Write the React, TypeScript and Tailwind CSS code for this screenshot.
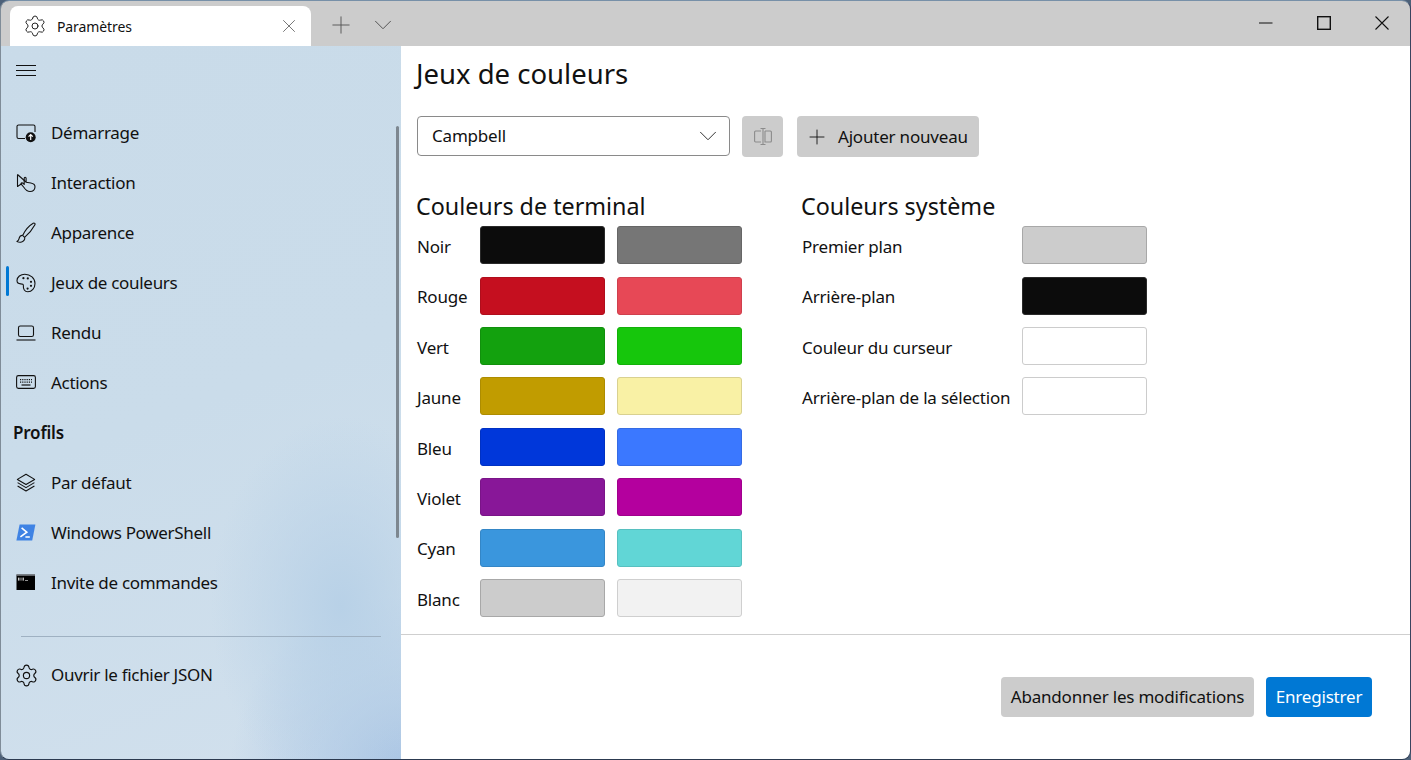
import { ChevronDown, Plus, Settings, X } from "lucide-react";
import type { ReactNode } from "react";

function StartupIcon() {
  return (
    <svg width="20" height="20" viewBox="0 0 20 20" fill="none" stroke="#111" strokeWidth="1.1">
      <path d="M9 15.5H2.6A1.6 1.6 0 0 1 1 13.9V3.6A1.6 1.6 0 0 1 2.6 2h14.8A1.6 1.6 0 0 1 19 3.6V9" />
      <circle cx="14.7" cy="14.2" r="5" fill="#111" stroke="none" />
      <path d="M14.7 17V11.6M12.6 13.6l2.1-2.1 2.1 2.1" stroke="#fff" strokeWidth="1.2" />
    </svg>
  );
}

function InteractionIcon() {
  return (
    <svg width="20" height="20" viewBox="0 0 20 20" fill="none" stroke="#111" strokeWidth="1.1" strokeLinejoin="round">
      <path d="M1.5 1.5V13.5L6 10.5" />
      <path d="M1.5 1.5L10 9" />
      <path d="M8 14.5L5.2 11.2C4.6 10.3 5.8 9.3 6.6 10L8.2 11.4V5.2C8.2 3.9 10.1 3.9 10.1 5.2V9.2L14.8 10C17.4 10.5 19.2 11.4 19 14C18.8 16.8 17 18.5 14 18.5C11.6 18.5 9.6 17 8 14.5Z" />
    </svg>
  );
}

function BrushIcon() {
  return (
    <svg width="20" height="22" viewBox="0 0 20 22" fill="none" stroke="#111" strokeWidth="1.1" strokeLinejoin="round">
      <path d="M6.6 13.4C9 8.6 13.4 3.4 17.2 1.2C18.4.6 19.5 1.6 18.9 2.8C16.8 6.8 12.6 12 8.6 15.4Z" />
      <path d="M6.6 13.4C3.8 13.4 3.2 15.4 2.9 17.2C2.7 18.3 1.9 19 .9 19.4C3.4 20.6 6.6 20.4 8 18.4C8.8 17.4 9 16.4 8.6 15.4" />
    </svg>
  );
}

function PaletteIcon() {
  return (
    <svg width="20" height="20" viewBox="0 0 20 20" fill="none" stroke="#111" strokeWidth="1.1">
      <path d="M8.8 1.2C4.6 1.2 1 4 1 7.6C1 10.2 3 10.9 4.7 10.9C6.4 10.9 7.7 11 7.4 13.2C7.1 15.8 8.6 18.8 11.8 18.8C15.8 18.8 19 15.2 19 10.4C19 5.2 14.4 1.2 8.8 1.2Z" />
      <circle cx="7.4" cy="5.2" r="1.1" fill="#111" stroke="none" />
      <circle cx="11.8" cy="5.4" r="1.1" fill="#111" stroke="none" />
      <circle cx="15" cy="8.8" r="1.1" fill="#111" stroke="none" />
      <circle cx="15" cy="12.8" r="1.1" fill="#111" stroke="none" />
      <circle cx="11.6" cy="15.6" r="1.1" fill="#111" stroke="none" />
    </svg>
  );
}

function LaptopIcon() {
  return (
    <svg width="20" height="20" viewBox="0 0 20 20" fill="none" stroke="#111" strokeWidth="1.1">
      <rect x="2.5" y="3" width="15" height="10.5" rx="1.8" />
      <path d="M.5 17h19" />
    </svg>
  );
}

function KeyboardIcon() {
  return (
    <svg width="20" height="20" viewBox="0 0 20 20" fill="none" stroke="#111" strokeWidth="1.1">
      <rect x=".6" y="2.6" width="18.8" height="12.8" rx="1.8" />
      <path d="M4 6.6h12M4 9.2h12" strokeDasharray="1.2 1" strokeWidth="1.2" />
      <path d="M5.5 12h9" strokeWidth="1.2" />
    </svg>
  );
}

function LayersIcon() {
  return (
    <svg width="20" height="20" viewBox="0 0 20 20" fill="none" stroke="#111" strokeWidth="1.1" strokeLinejoin="round">
      <path d="M10 1.2L18.6 6.4L10 11.4L1.4 6.4Z" />
      <path d="M1.6 9.6L10 14.6L18.4 9.6" />
      <path d="M1.6 13L10 18L18.4 13" />
    </svg>
  );
}

function PowerShellIcon() {
  return (
    <svg width="20" height="20" viewBox="0 0 20 20">
      <path d="M3.6 1.4H19.4L16.2 17.4H.4Z" fill="#3f83e4" />
      <path d="M5.6 4.8L10.8 9.2L4.4 13.8" fill="none" stroke="#fff" strokeWidth="1.6" />
      <path d="M9.4 14h4.4" stroke="#fff" strokeWidth="1.6" />
    </svg>
  );
}

function CmdIcon() {
  return (
    <svg width="20" height="20" viewBox="0 0 20 20">
      <rect x=".5" y="1.5" width="18.5" height="15.5" fill="#000" />
      <rect x=".5" y="1.5" width="18.5" height="1.2" fill="#8a8f96" />
      <rect x="2" y="4.6" width="1.5" height="3" fill="#c8c8c8" />
      <rect x="4.5" y="4.6" width="1" height="3" fill="#b0b0b0" />
      <rect x="6.5" y="4.6" width="1.5" height="3" fill="#b8b8b8" />
      <rect x="9" y="7" width="3" height="1" fill="#909090" />
    </svg>
  );
}

function SplitIcon() {
  return (
    <svg width="20" height="20" viewBox="0 0 20 20" fill="none" stroke="#8b8b8b" strokeWidth="1.1">
      <path d="M8 4H2.6A1 1 0 0 0 1.6 5V14A1 1 0 0 0 2.6 15H8" />
      <path d="M12 4H17.4A1 1 0 0 1 18.4 5V14A1 1 0 0 1 17.4 15H12V4" />
      <path d="M10 1.5V17.5M7.5 1.5H12.5M7.5 17.5H12.5" />
    </svg>
  );
}

function NavItem({ icon, label, active }: { icon: ReactNode; label: string; active?: boolean }) {
  return (
    <div className="relative h-[50px] flex items-center pl-[15px]">
      {active && <div className="absolute left-[5px] top-[8px] w-[3px] h-[30px] rounded-full bg-[#0078d4]" />}
      <div className="w-[20px] h-[20px] flex items-center justify-center shrink-0">{icon}</div>
      <span className="ml-[15px] text-[17px] text-[#111] tracking-[-0.3px]">{label}</span>
    </div>
  );
}

const TERMINAL = [
  { name: "Noir", a: "bg-[#0c0c0c] border-[#2a2a2a]", b: "bg-[#767676] border-[#666666]" },
  { name: "Rouge", a: "bg-[#c50f1f] border-[#b00e1c]", b: "bg-[#e74856] border-[#cf404d]" },
  { name: "Vert", a: "bg-[#13a10e] border-[#11900c]", b: "bg-[#16c60c] border-[#13b10a]" },
  { name: "Jaune", a: "bg-[#c19c00] border-[#ad8c00]", b: "bg-[#f9f1a5] border-[#d9d190]" },
  { name: "Bleu", a: "bg-[#0037da] border-[#0031c3]", b: "bg-[#3b78ff] border-[#356be4]" },
  { name: "Violet", a: "bg-[#881798] border-[#7a1488]", b: "bg-[#b4009e] border-[#a1008d]" },
  { name: "Cyan", a: "bg-[#3a96dd] border-[#3486c6]", b: "bg-[#61d6d6] border-[#57c0c0]" },
  { name: "Blanc", a: "bg-[#cccccc] border-[#a8a8a8]", b: "bg-[#f2f2f2] border-[#cfcfcf]" },
];

const SYSTEM = [
  { name: "Premier plan", c: "bg-[#cccccc] border-[#a8a8a8]" },
  { name: "Arrière-plan", c: "bg-[#0c0c0c] border-[#2a2a2a]" },
  { name: "Couleur du curseur", c: "bg-white border-[#cccccc]" },
  { name: "Arrière-plan de la sélection", c: "bg-white border-[#cccccc]" },
];

export default function App() {
  return (
    <div className="h-[760px] w-[1411px] bg-[#4d6179] overflow-hidden font-['Noto_Sans',sans-serif] tracking-[-0.2px]">
      <div className="h-full rounded-[9px] overflow-hidden flex flex-col border-t border-t-[#7790a8] border-l border-l-[#7f8c98] border-r border-r-[#39445f] border-b border-b-[#2c3a50]">
        {/* title bar */}
        <div className="h-[45px] shrink-0 bg-[#cccccc] flex">
          <div className="ml-[9px] mt-[5px] w-[301px] h-[40px] bg-white rounded-t-[8px] flex items-center pl-[13px] pr-[11px]">
            <Settings size={24} strokeWidth={1} className="text-[#222]" />
            <span className="ml-[10px] text-[14px] text-[#111] flex-1 tracking-[-0.1px]">Paramètres</span>
            <X size={22} strokeWidth={0.8} className="text-[#444]" />
          </div>
          <div className="ml-[16px] flex items-center h-full pt-[3px]">
            <Plus size={28} strokeWidth={0.8} className="text-[#555]" />
            <ChevronDown size={30} strokeWidth={0.8} className="ml-[13px] text-[#555]" />
          </div>
          <div className="ml-auto flex items-center h-full pr-[21px] pb-[1px]">
            <svg width="14" height="14" viewBox="0 0 14 14" stroke="#111" strokeWidth="1.2">
              <path d="M0 7h13.5" />
            </svg>
            <svg width="14" height="14" viewBox="0 0 14 14" fill="none" stroke="#111" strokeWidth="1.4" className="ml-[44px]">
              <rect x=".7" y=".7" width="12.6" height="12.6" />
            </svg>
            <svg width="14" height="14" viewBox="0 0 14 14" fill="none" stroke="#111" strokeWidth="1.1" className="ml-[44px]">
              <path d="M.5.5l13 13M13.5.5l-13 13" />
            </svg>
          </div>
        </div>

        <div className="flex-1 flex min-h-0">
          {/* sidebar */}
          <aside className="relative w-[400px] shrink-0 flex flex-col bg-[radial-gradient(ellipse_130px_190px_at_340px_560px,#b8d1e7_0%,rgba(184,209,231,0)_100%),radial-gradient(ellipse_170px_170px_at_400px_720px,#aac5e4_0%,rgba(170,197,228,0)_100%),linear-gradient(160deg,#c9dbe9_0%,#cadcea_50%,#d1e0ed_100%)]">
            <div className="h-[50px] pl-[14px] flex items-center shrink-0">
              <svg width="22" height="14" viewBox="0 0 22 14" stroke="#111" strokeWidth="1">
                <path d="M1 1.5h20M1 6.5h20M1 11.5h20" />
              </svg>
            </div>
            <nav className="mt-[12px]">
              <NavItem icon={<StartupIcon />} label="Démarrage" />
              <NavItem icon={<InteractionIcon />} label="Interaction" />
              <NavItem icon={<BrushIcon />} label="Apparence" />
              <NavItem icon={<PaletteIcon />} label="Jeux de couleurs" active />
              <NavItem icon={<LaptopIcon />} label="Rendu" />
              <NavItem icon={<KeyboardIcon />} label="Actions" />
              <div className="h-[50px] flex items-center pl-[12px] text-[17px] font-semibold text-[#111]">Profils</div>
              <NavItem icon={<LayersIcon />} label="Par défaut" />
              <NavItem icon={<PowerShellIcon />} label="Windows PowerShell" />
              <NavItem icon={<CmdIcon />} label="Invite de commandes" />
            </nav>
            <div className="mt-[28px] mx-[20px] w-[360px] h-px bg-[#9fb1c2]" />
            <div className="mt-[13px]">
              <NavItem icon={<Settings size={25} strokeWidth={1.1} className="shrink-0 text-[#111]" />} label="Ouvrir le fichier JSON" />
            </div>
            <div className="absolute left-[395px] top-[80px] w-[3px] h-[412px] rounded-full bg-[#7d8790]" />
          </aside>

          {/* content */}
          <main className="flex-1 bg-white flex flex-col min-w-0">
            <div className="h-[588px] shrink-0 pl-[15px]">
              <h1 className="h-[56px] flex items-center text-[27.5px] text-[#111] tracking-normal pb-[1px]">Jeux de couleurs</h1>
              <div className="mt-[14px] flex items-start pl-[1px]">
                <div className="w-[313px] h-[40px] border border-[#8a8a8a] rounded-[4px] flex items-center pl-[14px] pr-[6px] text-[17px] text-[#111]">
                  <span className="flex-1">Campbell</span>
                  <ChevronDown size={30} strokeWidth={0.8} className="text-[#333]" />
                </div>
                <div className="ml-[12px] w-[41px] h-[41px] bg-[#cccccc] rounded-[4px] flex items-center justify-center">
                  <SplitIcon />
                </div>
                <div className="ml-[14px] w-[182px] h-[41px] bg-[#cccccc] rounded-[4px] flex items-center pl-[8px] text-[17px] text-[#111]">
                  <Plus size={24} strokeWidth={0.9} />
                  <span className="ml-[9px] mt-[1px]">Ajouter nouveau</span>
                </div>
              </div>

              <div className="mt-[31px] flex">
                <section className="w-[385px] shrink-0">
                  <h2 className="h-[36px] flex items-center text-[23.3px] text-[#111] tracking-normal">Couleurs de terminal</h2>
                  <div className="mt-[2.1px] pl-[1px] grid grid-cols-[51px_125px_125px] gap-x-[12px] gap-y-[12.45px]">
                    {TERMINAL.map((row) => (
                      <div key={row.name} className="contents">
                        <span className="h-[38px] pt-[3px] flex items-center text-[17px] text-[#111]">{row.name}</span>
                        <div className={`h-[38px] rounded-[3px] border ${row.a}`} />
                        <div className={`h-[38px] rounded-[3px] border ${row.b}`} />
                      </div>
                    ))}
                  </div>
                </section>
                <section>
                  <h2 className="h-[36px] flex items-center text-[23.3px] text-[#111] tracking-normal">Couleurs système</h2>
                  <div className="mt-[2.1px] pl-[1px] grid grid-cols-[208px_125px] gap-x-[12px] gap-y-[12.45px]">
                    {SYSTEM.map((row) => (
                      <div key={row.name} className="contents">
                        <span className="h-[38px] pt-[3px] flex items-center text-[17px] text-[#111] whitespace-nowrap">{row.name}</span>
                        <div className={`h-[38px] rounded-[3px] border ${row.c}`} />
                      </div>
                    ))}
                  </div>
                </section>
              </div>
            </div>

            <div className="border-t border-[#cfcfcf] flex-1 flex justify-end items-start pt-[42px] pr-[38px]">
              <div className="w-[253px] h-[40px] bg-[#cccccc] rounded-[4px] flex items-center justify-center text-[17px] text-[#111]">
                Abandonner les modifications
              </div>
              <div className="ml-[12px] w-[106px] h-[40px] bg-[#0078d4] rounded-[4px] flex items-center justify-center text-[17px] text-white">
                Enregistrer
              </div>
            </div>
          </main>
        </div>
      </div>
    </div>
  );
}
